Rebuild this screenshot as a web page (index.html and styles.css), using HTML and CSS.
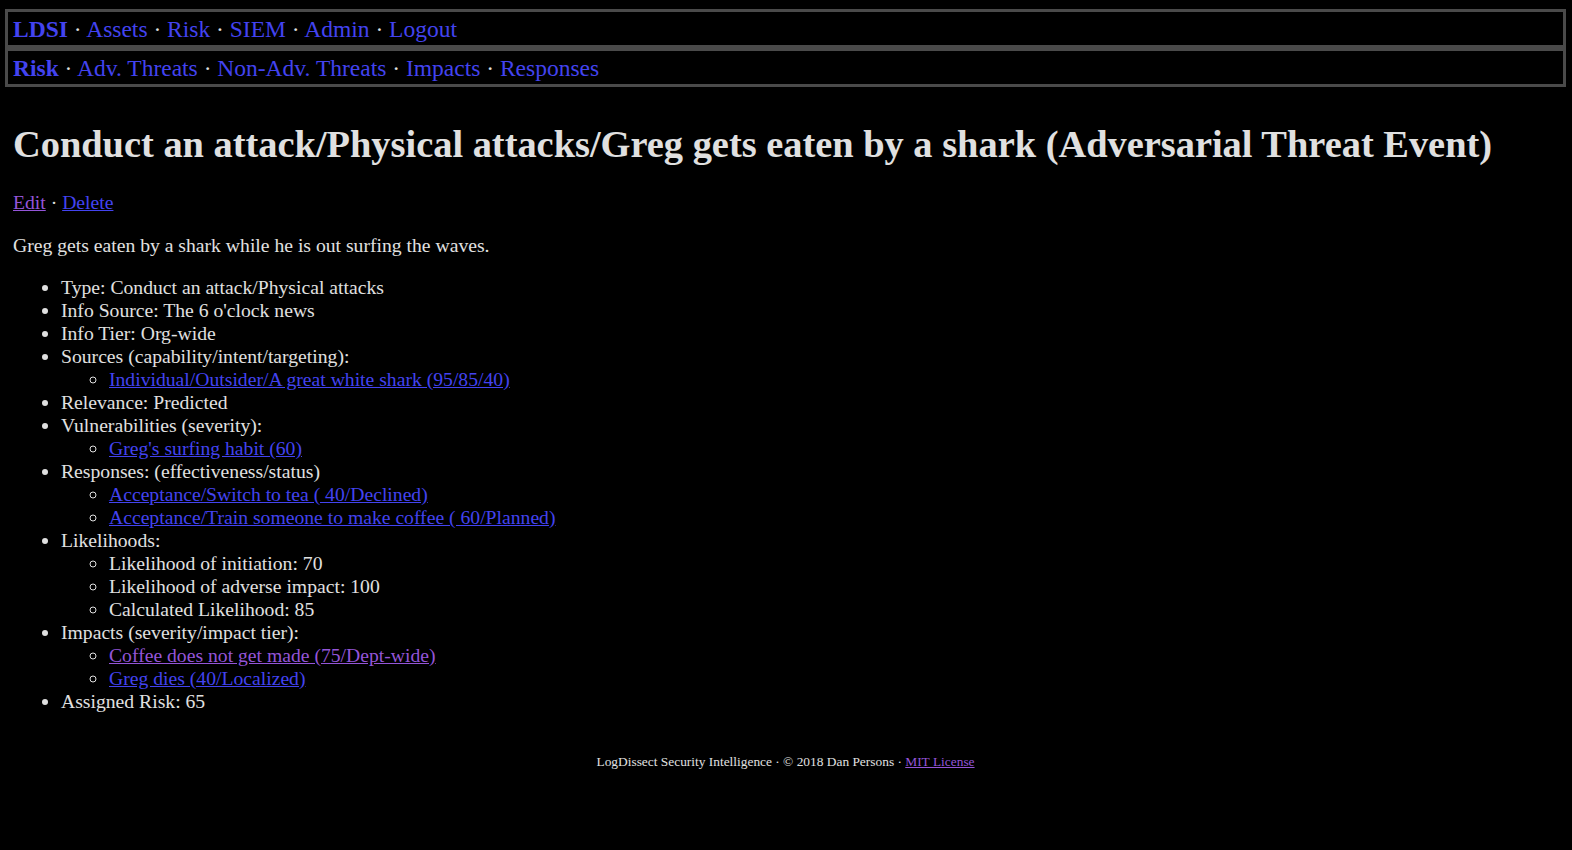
FILE: index.html
```html
<!DOCTYPE html>
<html>
<head>
<meta charset="utf-8">
<title>LDSI - Risk</title>
<link rel="stylesheet" href="styles.css">
</head>
<body>
<div class="page">
  <nav class="navs">
    <div class="navbar"><a class="brand" href="#">LDSI</a> · <a href="#">Assets</a> · <a href="#">Risk</a> · <a href="#">SIEM</a> · <a href="#">Admin</a> · <a href="#">Logout</a></div>
    <div class="navbar"><a class="brand" href="#">Risk</a> · <a href="#">Adv. Threats</a> · <a href="#">Non-Adv. Threats</a> · <a href="#">Impacts</a> · <a href="#">Responses</a></div>
  </nav>
  <main class="content">
    <h1 class="title">Conduct an attack/Physical attacks/Greg gets eaten by a shark (Adversarial Threat Event)</h1>
    <p class="para"><a class="link visited" href="#">Edit</a> · <a class="link" href="#">Delete</a></p>
    <p class="para">Greg gets eaten by a shark while he is out surfing the waves.</p>
    <ul class="list">
      <li>Type: Conduct an attack/Physical attacks</li>
      <li>Info Source: The 6 o'clock news</li>
      <li>Info Tier: Org-wide</li>
      <li>Sources (capability/intent/targeting):
        <ul class="sublist">
          <li><a class="link" href="#">Individual/Outsider/A great white shark (95/85/40)</a></li>
        </ul>
      </li>
      <li>Relevance: Predicted</li>
      <li>Vulnerabilities (severity):
        <ul class="sublist">
          <li><a class="link" href="#">Greg's surfing habit (60)</a></li>
        </ul>
      </li>
      <li>Responses: (effectiveness/status)
        <ul class="sublist">
          <li><a class="link" href="#">Acceptance/Switch to tea ( 40/Declined)</a></li>
          <li><a class="link" href="#">Acceptance/Train someone to make coffee ( 60/Planned)</a></li>
        </ul>
      </li>
      <li>Likelihoods:
        <ul class="sublist">
          <li>Likelihood of initiation: 70</li>
          <li>Likelihood of adverse impact: 100</li>
          <li>Calculated Likelihood: 85</li>
        </ul>
      </li>
      <li>Impacts (severity/impact tier):
        <ul class="sublist">
          <li><a class="link visited" href="#">Coffee does not get made (75/Dept-wide)</a></li>
          <li><a class="link" href="#">Greg dies (40/Localized)</a></li>
        </ul>
      </li>
      <li>Assigned Risk: 65</li>
    </ul>
  </main>
  <footer class="footer">LogDissect Security Intelligence · © 2018 Dan Persons · <a class="link visited" href="#">MIT License</a></footer>
</div>
</body>
</html>
```
FILE: styles.css
```css
html, body {
  margin: 0;
  padding: 0;
  background: #000;
}
body {
  color: #e0e0e0;
  font-family: "Liberation Serif", "Times New Roman", serif;
  font-size: 19.66px;
  line-height: 23px;
}
.page {
  padding: 9px 6px 0 5px;
}
.navs {
  display: block;
}
.navbar {
  border: 3px solid #4a4a4a;
  padding: 4px 5px 2px 5px;
  font-size: 23.5px;
  line-height: 27px;
  white-space: nowrap;
}
.navbar a {
  color: #4343f0;
  text-decoration: none;
}
.navbar a.brand {
  font-weight: bold;
}
.content {
  padding: 0 8px;
}
.title {
  font-size: 38.4px;
  line-height: 45px;
  font-weight: bold;
  margin: 35px 0 24px 0;
  white-space: nowrap;
}
.para {
  margin: 0 0 20px 0;
}
.link {
  color: #4343f0;
  text-decoration: underline;
}
.link.visited {
  color: #9455d8;
}
.list {
  margin: -1px 0 0 0;
  padding-left: 48px;
  list-style-type: disc;
}
.sublist {
  margin: 0;
  padding-left: 48px;
  list-style-type: circle;
}
.footer {
  text-align: center;
  font-size: 13.4px;
  line-height: 16px;
  margin-top: 41px;
}
```
